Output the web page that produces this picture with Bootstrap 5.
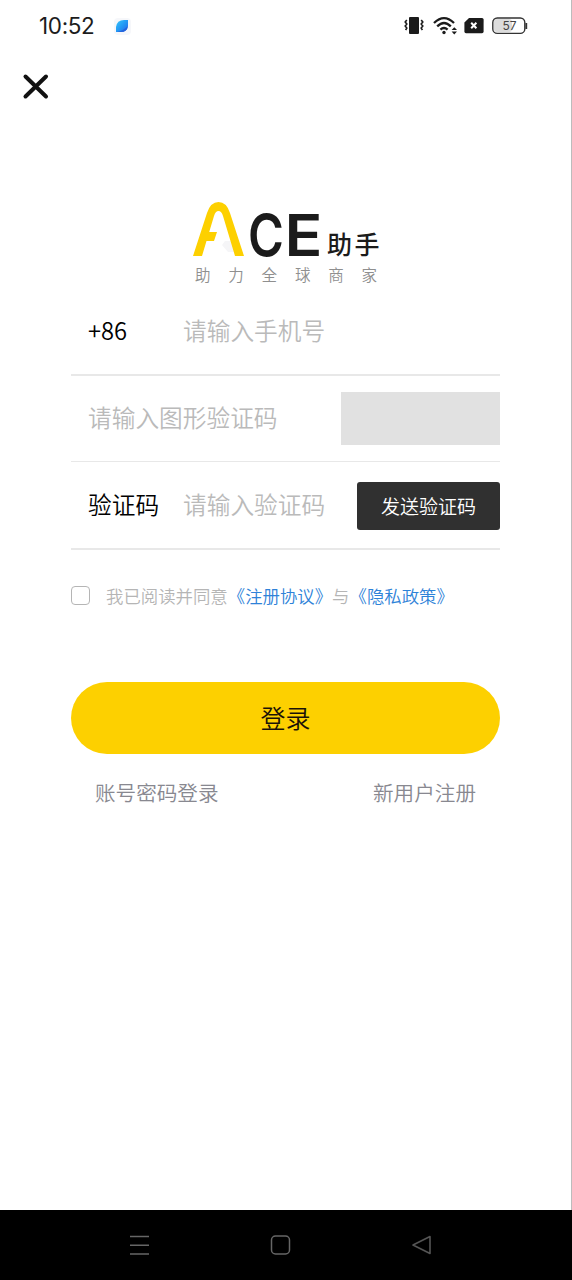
<!DOCTYPE html>
<html lang="zh-CN">
<head>
  <meta charset="UTF-8" />
  <meta name="viewport" content="width=device-width, initial-scale=1.0" />
  <title>ACE助手 - 登录</title>
  <link href="https://cdn.jsdelivr.net/npm/bootstrap@5.3.0/dist/css/bootstrap.min.css" rel="stylesheet" />
  <style>
    body { font-family: "Noto Sans CJK SC", sans-serif; font-weight: 350; color: #000; }
    svg { display: block; overflow: visible; }
    .screen { height: 1280px; }
    .page { border-right: 1px solid #bcbcbc; }
    .status-bar { height: 52px; padding: 0 43px 0 39px; }
    .clock { font: 400 22.5px/1 Inter, sans-serif; color: #1c1c1c; width: 74px; white-space: nowrap; letter-spacing: -.35px; }
    .btn-x { margin: 22px 0 0 23px; width: 26px; }
    .brand { margin: 101px auto 0 192px; width: 190px; }
    .login-form { margin: 0 71px; }
    .field-row { border-bottom: 2px solid #e8e8e8; height: 87px; padding: 0 0 2px 17px; font-size: 23.7px; }
    .field-row.captcha-row { border-bottom-width: 1px; height: 86px; padding-bottom: 1px; }
    .field-row.code-row { height: 88px; padding-bottom: 0; }
    .field-row .form-control { font-size: 23.7px; font-weight: 350; line-height: 34px; border: 0; padding: 0 0 2px; background: none; border-radius: 0; }
    .field-row .form-control::placeholder { color: #bababa; opacity: 1; }
    .field-label { width: 95px; flex: none; line-height: 34px; padding-bottom: 2px; }
    .captcha { width: 159px; height: 53px; background: #e1e1e1; flex: none; }
    .btn-code { --bs-btn-bg: #303030; --bs-btn-color: #fff; width: 143px; height: 48px; flex: none; font-size: 19px; font-weight: 350; border: 0; border-radius: 3px; padding: 1px 0 0; margin-top: 2px; }
    .agree { margin-top: 33px; height: 26px; font-size: 17.4px; line-height: 26px; color: #b5b5b5; white-space: nowrap; }
    .agree .form-check-input { width: 19px; height: 19px; margin: -2px 16px 0 0; border: 1.5px solid #b5b5b5; border-radius: 4px; flex: none; }
    .agree a { color: #2e82d8; text-decoration: none; }
    .btn-login { --bs-btn-bg: #fdd000; --bs-btn-color: #1a1208; height: 72px; margin-top: 73px; border: 0; font-size: 25px; font-weight: 350; }
    .more-links { padding: 22px 24px 0; font-size: 20.6px; line-height: 32px; }
    .more-links a { color: #888890; text-decoration: none; }
    .nav-keys { height: 70px; background: #000; padding: 0 140px 0 129px; }
  </style>
</head>
<body>
  <div class="screen d-flex flex-column">
    <div class="page flex-grow-1 bg-white">
      <div class="status-bar d-flex align-items-center">
        <div class="clock">10:52</div>
        <svg width="18" height="18" viewBox="0 0 18 18">
          <defs>
            <linearGradient id="leaf" x1="0" y1="0" x2="1" y2="1">
              <stop offset="0" stop-color="#35c8fb" />
              <stop offset=".5" stop-color="#2499f5" />
              <stop offset="1" stop-color="#2465e8" />
            </linearGradient>
          </defs>
          <rect x="1" y="1" width="17" height="17" rx="4" fill="#f6f7fa" />
          <path d="M3 15V10Q4 3 11 3h4v6q-1 6-7 6z" fill="url(#leaf)" />
          <path d="M4 15q6-1 11-6-1 6-7 6z" fill="#2563dc" />
        </svg>
        <div class="d-flex align-items-center ms-auto">
          <!-- vibrate -->
          <svg width="20" height="20" viewBox="0 0 20 20" fill="none" stroke="#1b1b1b" stroke-width="1.6">
            <rect x="5" y="1" width="10" height="17" rx="1" fill="#1b1b1b" stroke="none" />
            <path d="M2.8 4L1.2 6l1.6 2-1.6 2 1.6 2-1.2 2M17.2 4l1.6 2-1.6 2 1.6 2-1.6 2 1.2 2" />
          </svg>
          <!-- wifi -->
          <svg class="ms-2" width="26" height="20" viewBox="0 0 26 20" fill="none" stroke="#1b1b1b" stroke-width="2.3">
            <path d="M2 7Q12-2.8 22 7M5.2 10.4Q12 3.6 18.8 10.4M8.4 13.7Q12 10.3 15.6 13.7" />
            <circle cx="12" cy="16.5" r="1.7" fill="#1b1b1b" stroke="none" />
            <path d="M19.6 14l2.7-2.8 2.7 2.8zM19.6 15.6H25L22.3 18.4z" fill="#1b1b1b" stroke="none" />
          </svg>
          <!-- sim -->
          <svg width="20" height="18" viewBox="0 0 20 18" style="margin-left:6px">
            <path d="M5 1h13a1.6 1.6 0 011.6 1.6v12a1.6 1.6 0 01-1.6 1.6H2a1.6 1.6 0 01-1.6-1.6V5.5z" fill="#1b1b1b" />
            <path d="M7.2 5.8l5.2 5.4M12.4 5.8l-5.2 5.4" stroke="#fff" stroke-width="2" />
          </svg>
          <!-- battery -->
          <svg class="ms-2" width="36" height="18" viewBox="0 0 36 18">
            <rect x="2" y="2" width="18" height="13" rx="3" fill="#dcdcdc" />
            <rect x=".8" y="1" width="32" height="15.4" rx="4.5" fill="none" stroke="#333" stroke-width="1.4" />
            <path d="M34.3 6v6" stroke="#333" stroke-width="1.8" />
            <text x="17.5" y="13" text-anchor="middle" font-family="Inter, sans-serif" font-size="12" font-weight="400" fill="#444">57</text>
          </svg>
        </div>
      </div>

      <div class="btn-x" role="button" aria-label="关闭">
        <svg width="26" height="26" viewBox="0 0 26 26">
          <path d="M2.5 2.5l20.5 20M23 2.5l-20.500 20" stroke="#111" stroke-width="4" stroke-linecap="round" />
        </svg>
      </div>

      <div class="brand">
        <svg width="190" height="88" viewBox="0 0 190 88">
          <path d="M33 40h8l3 11h-8l-6-7z" fill="#f5f5f7" />
          <!-- arch mark with the small tick inside -->
          <path d="M1 55L15 12Q18.5 1 26.5 1Q34.5 1 38 12L52 55H43L31 15Q29.5 10 26.5 10Q23.5 10 22 15L10 55Z" fill="#fdd000" />
          <path d="M14 31h11l-3 9H12z" fill="#fdd000" />
          <g font-family="Inter, sans-serif" font-weight="600" fill="#1b1b1b">
            <text transform="translate(56 54.5) scale(.84 1)" font-size="58">C</text>
            <text transform="translate(92.5 54.5) scale(1.08 1)" font-size="58">E</text>
          </g>
          <text x="135" y="53" font-size="25" font-weight="500" letter-spacing="2.5" fill="#1b1b1b">助手</text>
          <text x="3" y="80" font-size="15.5" letter-spacing="17.8" fill="#8f8f8f">助力全球商家</text>
        </svg>
      </div>

      <form class="login-form">
        <div class="field-row d-flex align-items-center">
          <span class="field-label">+86</span>
          <input type="text" class="form-control shadow-none" placeholder="请输入手机号" />
        </div>
        <div class="field-row captcha-row d-flex align-items-center">
          <input type="text" class="form-control shadow-none" placeholder="请输入图形验证码" />
          <div class="captcha"></div>
        </div>
        <div class="field-row code-row d-flex align-items-center">
          <span class="field-label">验证码</span>
          <input type="text" class="form-control shadow-none" placeholder="请输入验证码" />
          <button type="button" class="btn btn-code">发送验证码</button>
        </div>
        <div class="agree d-flex align-items-center">
          <input class="form-check-input" type="checkbox" id="agree" />
          <label for="agree">我已阅读并同意<a href="#">《注册协议》</a>与<a href="#">《隐私政策》</a></label>
        </div>
        <button type="submit" class="btn btn-login rounded-pill w-100">登录</button>
        <div class="more-links d-flex justify-content-between">
          <a href="#">账号密码登录</a>
          <a href="#">新用户注册</a>
        </div>
      </form>
    </div>

    <!-- system navigation keys -->
    <div class="nav-keys d-flex justify-content-between align-items-center">
      <svg width="21" height="21" viewBox="0 0 21 21" stroke="#666" stroke-width="1.5"><path d="M1 1.5h19M1 10.2h19M1 19h19" /></svg>
      <svg width="21" height="21" viewBox="0 0 21 21" fill="none" stroke="#666" stroke-width="1.5"><rect x="1.5" y="1" width="18" height="18" rx="4" /></svg>
      <svg width="21" height="21" viewBox="0 0 21 21" fill="none" stroke="#555" stroke-width="1.6" stroke-linejoin="round"><path d="M2 10L19 1.5v17z" /></svg>
    </div>
  </div>
  <script src="https://cdn.jsdelivr.net/npm/bootstrap@5.3.0/dist/js/bootstrap.bundle.min.js"></script>
</body>
</html>
